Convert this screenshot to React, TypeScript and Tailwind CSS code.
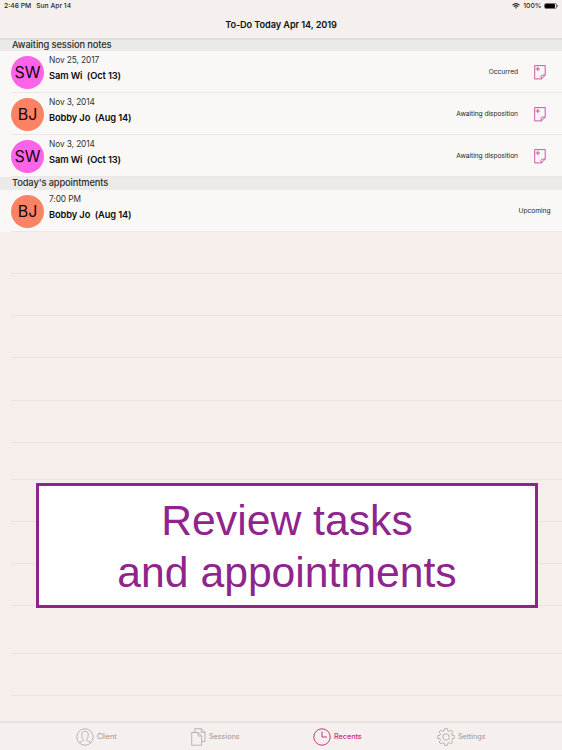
import React from "react";

type Entry = { initials: string; color: string; date: string; name: string; status: string; note?: boolean };

const awaiting: Entry[] = [
  { initials: "SW", color: "bg-[#fb64e8]", date: "Nov 25, 2017", name: "Sam Wi  (Oct 13)", status: "Occurred", note: true },
  { initials: "BJ", color: "bg-[#fb8264]", date: "Nov 3, 2014", name: "Bobby Jo  (Aug 14)", status: "Awaiting disposition", note: true },
  { initials: "SW", color: "bg-[#fb64e8]", date: "Nov 3, 2014", name: "Sam Wi  (Oct 13)", status: "Awaiting disposition", note: true },
];

const today: Entry[] = [
  { initials: "BJ", color: "bg-[#fb8264]", date: "7:00 PM", name: "Bobby Jo  (Aug 14)", status: "Upcoming" },
];

const emptyRows = ["h-[42px]", "h-[42px]", "h-[42px]", "h-[43px]", "h-[42px]", "h-[37px]", "h-[42px]", "h-[42px]", "h-[42px]", "h-[48px]", "h-[42px]"];

function NoteIcon() {
  return (
    <svg width="12" height="15" viewBox="0 0 12 15" fill="none" stroke="#c8469a" strokeWidth="0.9">
      <path d="M.7.6H11.2V10.2L7.4 13.9H.7Z" />
      <path d="M7.4 13.9V12.2L6.6 11.6 8.2 10.2H11.2M3.8 1.8V6.2M1.6 4H6" />
    </svg>
  );
}

function WifiIcon() {
  return (
    <svg width="8" height="6" viewBox="0 0 8 6" fill="none" stroke="#1c1c1c" strokeWidth="1.1">
      <path d="M.5 2.2Q4-1 7.5 2.2M1.8 3.6Q4 1.7 6.2 3.6" />
      <path d="M3 4.6Q4 3.8 5 4.6L4 5.7Z" fill="#1c1c1c" stroke="none" />
    </svg>
  );
}

function Row({ e }: { e: Entry }) {
  return (
    <div className="h-[42px] bg-[#f9f8f7] pl-[11px]">
      <div className="flex h-full border-b border-[#e9e7e8]">
        <div className={`mt-[4.5px] flex size-[33px] shrink-0 items-center justify-center rounded-full text-[16px] leading-none text-[#16060f] ${e.color}`}>
          {e.initials}
        </div>
        <div className="flex-1 whitespace-pre pl-[5px] pt-[3px]">
          <div className="text-[8.3px] leading-[13px] tracking-[-0.01em] text-[#303030]">{e.date}</div>
          <div className="mt-[2px] text-[9.3px] font-semibold leading-[13px] tracking-[-0.012em] text-[#0c0c0c]">{e.name}</div>
        </div>
        <div className={`flex items-center pt-[2px] text-[6.7px] tracking-[-0.01em] text-[#262626] ${e.note ? "pr-[16px]" : "pr-[11.5px]"}`}>{e.status}</div>
        {e.note && (
          <div className="flex w-[28px] items-center pt-px">
            <NoteIcon />
          </div>
        )}
      </div>
    </div>
  );
}

function SectionTitle({ children }: { children: string }) {
  return <div className="h-[12px] bg-[#ebeae9] pl-[12px] text-[9.3px] font-medium leading-[10px] tracking-[-0.012em] text-[#2d2c2b]">{children}</div>;
}

function ClientIcon() {
  return (
    <svg width="18" height="18" viewBox="0 0 18 18" fill="none" stroke="#aaa5a4" strokeWidth="0.8">
      <circle cx="9" cy="9" r="8.2" />
      <path d="M3.2 14.8C3.7 13.4 7 13.5 7.2 12.4V11.2C6.2 10.4 5.9 9 5.9 7.7 5.1 4.9 6.8 3.3 9 3.3S12.9 4.9 12.1 7.7C12.1 9 11.8 10.4 10.8 11.2V12.4C11 13.5 14.3 13.4 14.8 14.8" />
    </svg>
  );
}

function SessionsIcon() {
  return (
    <svg width="15" height="18" viewBox="0 0 15 18" fill="none" stroke="#aaa5a4" strokeWidth="0.8">
      <path d="M.7 4.5H7.2L10.7 8V17.2H.7Z" />
      <path d="M7.2 4.5V8H10.7M3.8 4.5V.7H10.3L14 4.4V13.6H10.7M10.3.7V4.4H14" />
    </svg>
  );
}

function RecentsIcon() {
  return (
    <svg width="18" height="18" viewBox="0 0 18 18" fill="none" stroke="#c92a82" strokeWidth="0.95">
      <circle cx="9" cy="9" r="8.2" />
      <path d="M9 3.5V9H14" />
    </svg>
  );
}

function SettingsIcon() {
  return (
    <svg width="18" height="18" viewBox="0 0 18 18" fill="none" stroke="#aaa5a4" strokeWidth="0.8" strokeLinejoin="round">
      <circle cx="9" cy="9" r="3.2" />
      <path d="M7.5.7H10.5L10.8 2.9 12.3 3.5 14 2.1 15.9 4 14.5 5.8 15.1 7.3 17.3 7.6V10.4L15.1 10.7 14.5 12.2 15.9 14 14 15.9 12.3 14.5 10.8 15.1 10.5 17.3H7.5L7.2 15.1 5.7 14.5 4 15.9 2.1 14 3.5 12.2 2.9 10.7.7 10.4V7.6L2.9 7.3 3.5 5.8 2.1 4 4 2.1 5.7 3.5 7.2 2.9Z" />
    </svg>
  );
}

export default function App() {
  return (
    <div className="relative flex h-[750px] w-[562px] flex-col overflow-hidden bg-[#f5eeeb] font-['Inter','Liberation_Sans',sans-serif]">
      <header className="flex h-[40px] shrink-0 flex-col border-b-2 border-[#e2dedc] bg-[#f5f0ed]">
        <div className="flex h-[12px] items-center justify-between pl-[4px] pr-[4px] text-[6.75px] font-medium leading-none text-[#252525]">
          <div className="flex gap-[5px]">
            <span>2:46 PM</span>
            <span>Sun Apr 14</span>
          </div>
          <div className="flex items-center">
            <WifiIcon />
            <span className="ml-[3px]">100%</span>
            <span className="ml-[2px] flex h-[6.5px] w-[13px] rounded-[2px] border-[0.5px] border-[#777] p-[0.5px]">
              <span className="flex-1 rounded-[1px] bg-black" />
            </span>
            <span className="ml-[0.5px] h-[2px] w-px bg-[#888]" />
          </div>
        </div>
        <h1 className="mt-[6px] text-center text-[9.2px] font-semibold leading-[14px] tracking-[-0.01em] text-[#111]">To-Do Today Apr 14, 2019</h1>
      </header>

      <SectionTitle>Awaiting session notes</SectionTitle>
      <div className="-mt-px">
        {awaiting.map((e, i) => <Row key={i} e={e} />)}
      </div>
      <div className="h-px bg-[#ebeae9]" />
      <SectionTitle>Today's appointments</SectionTitle>
      {today.map((e, i) => <Row key={i} e={e} />)}

      <main className="flex-1 overflow-hidden pl-[11px]">
        {emptyRows.map((h, i) => <div key={i} className={`border-b border-[#ebe3e2] ${h}`} />)}
      </main>

      <nav className="flex h-[29px] shrink-0 items-center border-t-2 border-[#e7e1df] bg-[#f5f0ed] text-[7.2px] text-[#989391]">
        <div className="ml-[76px] flex w-[115px] items-center gap-[3px]"><ClientIcon /><span className="pt-px">Client</span></div>
        <div className="flex w-[122px] items-center gap-[3px]"><SessionsIcon /><span className="pt-px">Sessions</span></div>
        <div className="flex w-[124px] items-center gap-[3px] text-[#c92a82]"><RecentsIcon /><span className="pt-px font-medium">Recents</span></div>
        <div className="flex items-center gap-[3px]"><SettingsIcon /><span className="pt-px">Settings</span></div>
      </nav>

      <div className="absolute left-[36px] top-[483px] h-[125px] w-[502px] border-[3px] border-[#8e248c] bg-white pt-[9px] text-center font-['Liberation_Sans',Arial,sans-serif] text-[42.7px] leading-[51.5px] text-[#8e248c]">
        Review tasks<br />and appointments
      </div>
    </div>
  );
}
